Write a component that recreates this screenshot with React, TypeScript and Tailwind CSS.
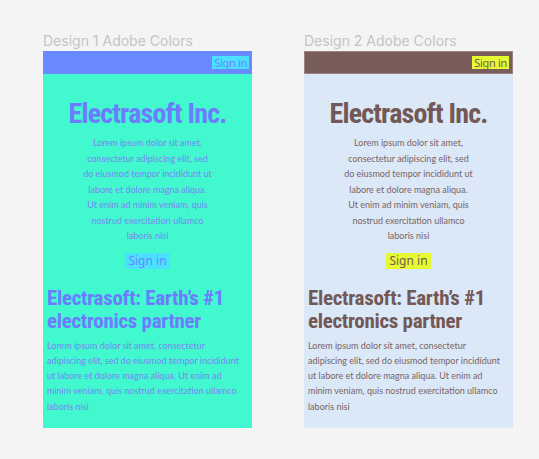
import React from "react";

interface Palette {
  header: string;
  body: string;
  heading: string;
  text: string;
  button: string;
  buttonText: string;
}

const lorem =
  "Lorem ipsum dolor sit amet, consectetur adipiscing elit, sed do eiusmod tempor incididunt ut labore et dolore magna aliqua. Ut enim ad minim veniam, quis nostrud exercitation ullamco laboris nisi";

const heroLines = [
  "Lorem ipsum dolor sit amet,",
  "consectetur adipiscing elit, sed",
  "do eiusmod tempor incididunt ut",
  "labore et dolore magna aliqua.",
  "Ut enim ad minim veniam, quis",
  "nostrud exercitation ullamco",
  "laboris nisi",
];

const Design: React.FC<{ label: string; p: Palette }> = ({ label, p }) => {
  return (
    <div className="w-[209px] flex flex-col">
      <div className="h-[20px] text-[14px] leading-[20px] text-[#c4c4c4] font-['Inter',sans-serif]">
        {label}
      </div>
      <div className={`h-[377px] ${p.body}`}>
        <div className={`h-[23px] ${p.header} flex items-center justify-end pr-[3px]`}>
          <span
            className={`${p.button} ${p.buttonText} px-[2px] text-[11px] leading-[13px] tracking-[-0.3px] font-['Noto_Sans',sans-serif]`}
          >
            Sign in
          </span>
        </div>

        <h1
          className={`mt-[24px] text-center text-[28px] leading-[32px] font-bold font-stretch-condensed tracking-[-0.8px] font-['Roboto',sans-serif] ${p.heading}`}
        >
          Electrasoft Inc.
        </h1>
        <div
          className={`mt-[5px] text-center text-[9px] leading-[15.5px] font-['Lato',sans-serif] ${p.text}`}
        >
          {heroLines.map((l, i) => (
            <div key={i}>{l}</div>
          ))}
        </div>
        <div className="mt-[9px] flex justify-center">
          <span
            className={`${p.button} ${p.buttonText} px-[3px] text-[12px] leading-[16px] font-['Noto_Sans',sans-serif]`}
          >
            Sign in
          </span>
        </div>

        <h2
          className={`mt-[18px] px-[4px] text-[21px] leading-[23px] font-bold font-stretch-condensed tracking-[-0.3px] font-['Roboto',sans-serif] ${p.heading}`}
        >
          Electrasoft: Earth’s #1
          <br />
          electronics partner
        </h2>
        <p
          className={`mt-[5px] px-[4px] pr-[12px] text-[9px] leading-[15.3px] font-['Lato',sans-serif] ${p.text}`}
        >
          {lorem}
        </p>
      </div>
    </div>
  );
};

const App: React.FC = () => {
  return (
    <div className="w-[539px] h-[459px] bg-[#f4f4f5] flex gap-[52px] pl-[43px] pt-[31px]">
      <Design
        label="Design 1 Adobe Colors"
        p={{
          header: "bg-[#6889ff]",
          body: "bg-[#41f8cf]",
          heading: "text-[#6d7cff]",
          text: "text-[#7e84f5]",
          button: "bg-[#4ce0ff]",
          buttonText: "text-[#6a86ff]",
        }}
      />
      <Design
        label="Design 2 Adobe Colors"
        p={{
          header: "bg-[#785d5b] border border-[#9a8482]",
          body: "bg-[#dae8f8]",
          heading: "text-[#735856]",
          text: "text-[#7a6462]",
          button: "bg-[#e6fa33]",
          buttonText: "text-[#735856]",
        }}
      />
    </div>
  );
};

export default App;
